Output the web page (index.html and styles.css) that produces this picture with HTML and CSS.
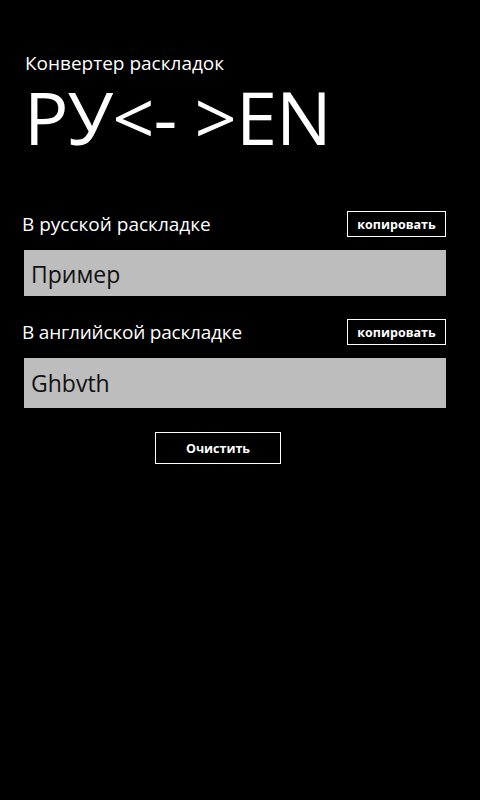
FILE: index.html
```html
<!DOCTYPE html>
<html lang="ru">
<head>
<meta charset="utf-8">
<title>Конвертер раскладок</title>
<link rel="stylesheet" href="styles.css">
</head>
<body>
<main class="page">
  <header class="header">
    <div class="app-title">Конвертер раскладок</div>
    <h1 class="page-title">РУ&lt;- &gt;EN</h1>
  </header>
  <section class="group group-ru">
    <div class="row">
      <span class="label">В русской раскладке</span>
      <button class="btn btn-copy">копировать</button>
    </div>
    <div class="field field-ru">Пример</div>
  </section>
  <section class="group group-en">
    <div class="row">
      <span class="label">В английской раскладке</span>
      <button class="btn btn-copy">копировать</button>
    </div>
    <div class="field field-en">Ghbvth</div>
  </section>
  <div class="actions">
    <button class="btn btn-clear">Очистить</button>
  </div>
</main>
</body>
</html>
```
FILE: styles.css
```css
html, body {
  margin: 0;
  padding: 0;
  background: #000;
  color: #fff;
  font-family: "Open Sans", "Noto Sans", sans-serif;
}
.page {
  width: 480px;
  height: 800px;
  box-sizing: border-box;
  padding: 50px 34px 0 24px;
}
.header {
  display: flex;
  flex-direction: column;
}
.app-title {
  font-size: 19px;
  line-height: 26px;
  padding-left: 1px;
}
.page-title {
  margin: 3px 0 0 0;
  font-weight: 400;
  font-size: 74px;
  line-height: 76px;
  letter-spacing: -1px;
}
.group {
  display: flex;
  flex-direction: column;
}
.group-ru { margin-top: 56px; }
.group-en { margin-top: 23px; }
.row {
  display: flex;
  align-items: center;
  justify-content: space-between;
}
.label {
  font-size: 19px;
  margin-left: -2px;
}
.group-en .label {
  letter-spacing: -0.2px;
}
.btn {
  background: transparent;
  color: #fff;
  border: 1px solid #fff;
  font-family: "Open Sans", "Noto Sans", sans-serif;
  font-weight: 700;
  font-size: 12.5px;
  padding: 0;
  cursor: pointer;
}
.btn-copy {
  width: 99px;
  height: 26px;
}
.field {
  margin-top: 13px;
  background: #bdbdbd;
  color: #111;
  font-size: 23px;
  padding-left: 7px;
}
.field-ru {
  height: 46px;
  line-height: 48px;
}
.field-en {
  height: 50px;
  line-height: 50px;
}
.actions {
  display: flex;
  padding-left: 131px;
  margin-top: 24px;
}
.btn-clear {
  width: 126px;
  height: 32px;
}
```
